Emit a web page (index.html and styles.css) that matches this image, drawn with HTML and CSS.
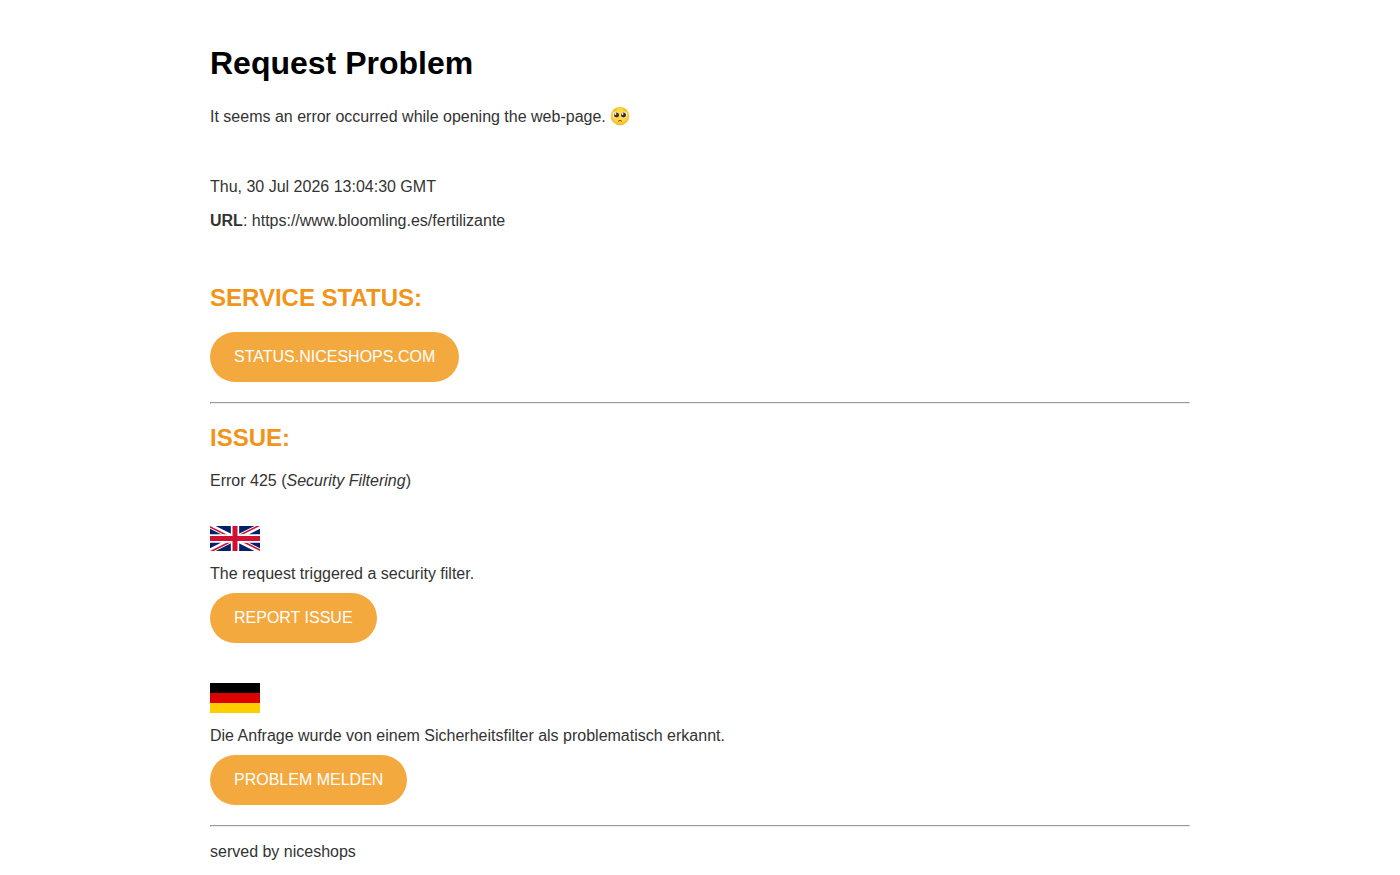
FILE: index.html
```html
<!DOCTYPE html>
<html lang="en">
<head>
  <meta charset="UTF-8">
  <meta name="viewport" content="width=device-width, initial-scale=1">
  <title>Request Problem</title>
  <link rel="stylesheet" href="styles.css">
</head>
<body>
  <main class="content">
    <h1>Request Problem</h1>
    <p>It seems an error occurred while opening the web-page.
      <svg class="emoji" viewBox="0 0 40 40" role="img" aria-label="Pleading face">
        <defs>
          <radialGradient id="face" cx="50%" cy="45%" r="55%">
            <stop offset="0" stop-color="#ffe63f"/>
            <stop offset=".7" stop-color="#fdd33a"/>
            <stop offset="1" stop-color="#f2b234"/>
          </radialGradient>
        </defs>
        <circle cx="20" cy="20" r="18.5" fill="url(#face)"/>
        <circle cx="12" cy="18" r="6" fill="#fff"/>
        <circle cx="28" cy="18" r="6" fill="#fff"/>
        <circle cx="13" cy="18" r="5" fill="#4a2c14"/>
        <circle cx="27" cy="18" r="5" fill="#4a2c14"/>
        <circle cx="11" cy="16" r="1.8" fill="#fff"/>
        <circle cx="25" cy="16" r="1.8" fill="#fff"/>
        <path d="M8 9q3-1 5-3M32 9q-3-1-5-3" fill="none" stroke="#d79a2b" stroke-width="1.5" stroke-linecap="round"/>
        <path d="M17 30q3-3 6 0" fill="none" stroke="#7a3d0c" stroke-width="2" stroke-linecap="round"/>
      </svg>
    </p>

    <div class="request">
      <p>Thu, 30 Jul 2026 13:04:30 GMT</p>
      <p><b>URL</b>: https://www.bloomling.es/fertilizante</p>
    </div>

    <h2>Service Status:</h2>
    <a class="btn" href="https://status.niceshops.com">status.niceshops.com</a>
    <hr>

    <h2>Issue:</h2>
    <p>Error 425 (<i>Security Filtering</i>)</p>

    <div class="lang">
      <svg class="flag" viewBox="0 0 60 30" role="img" aria-label="English">
        <clipPath id="diagonals"><path d="M30 15h30v15zv15H0zH0V0zV0h30z"/></clipPath>
        <path d="M0 0h60v30H0z" fill="#012169"/>
        <path d="M0 0l60 30M60 0L0 30" stroke="#fff" stroke-width="6"/>
        <path d="M0 0l60 30M60 0L0 30" clip-path="url(#diagonals)" stroke="#d01030" stroke-width="4"/>
        <path d="M30 0v30M0 15h60" stroke="#fff" stroke-width="10"/>
        <path d="M30 0v30M0 15h60" stroke="#d01030" stroke-width="6"/>
      </svg>
      <p>The request triggered a security filter.</p>
      <a class="btn" href="#">Report issue</a>
    </div>

    <div class="lang" lang="de">
      <svg class="flag" viewBox="0 0 5 3" role="img" aria-label="Deutsch">
        <path d="M0 0h5v3H0z"/>
        <path d="M0 1h5v2H0z" fill="#d00"/>
        <path d="M0 2h5v1H0z" fill="#ffce00"/>
      </svg>
      <p>Die Anfrage wurde von einem Sicherheitsfilter als problematisch erkannt.</p>
      <a class="btn" href="#">Problem melden</a>
    </div>
    <hr>

    <footer>served by niceshops</footer>
  </main>
</body>
</html>
```

FILE: styles.css
```css
body { margin:0; background:#fff; color:#333; font-family:Helvetica,"Liberation Sans",Arial,sans-serif; font-size:16px; line-height:18px; }
.content { width:70%; margin:0 auto; padding:45px 0 14px; }
h1 { margin:0 0 25px; color:#000; font-size:32px; line-height:36px; }
h2 { margin:20px 0; color:#f0941a; font-size:24px; line-height:28px; text-transform:uppercase; }
p { margin:16px 0; }
.emoji { width:20px; height:20px; margin:0 0 -1px; vertical-align:-3px; }
.request { margin:52px 0 54px; }
.btn { display:inline-block; padding:16px 24px; border-radius:25px; background:#f4a93f; color:#fff; text-decoration:none; text-transform:uppercase; }
hr { margin:20px 0; }
.lang { margin:36px 0 20px; }
.lang + .lang { margin-top:40px; }
.lang p { margin:14px 0 10px; }
.flag { display:block; width:50px; height:auto; }
footer { margin-top:-4px; }
```
